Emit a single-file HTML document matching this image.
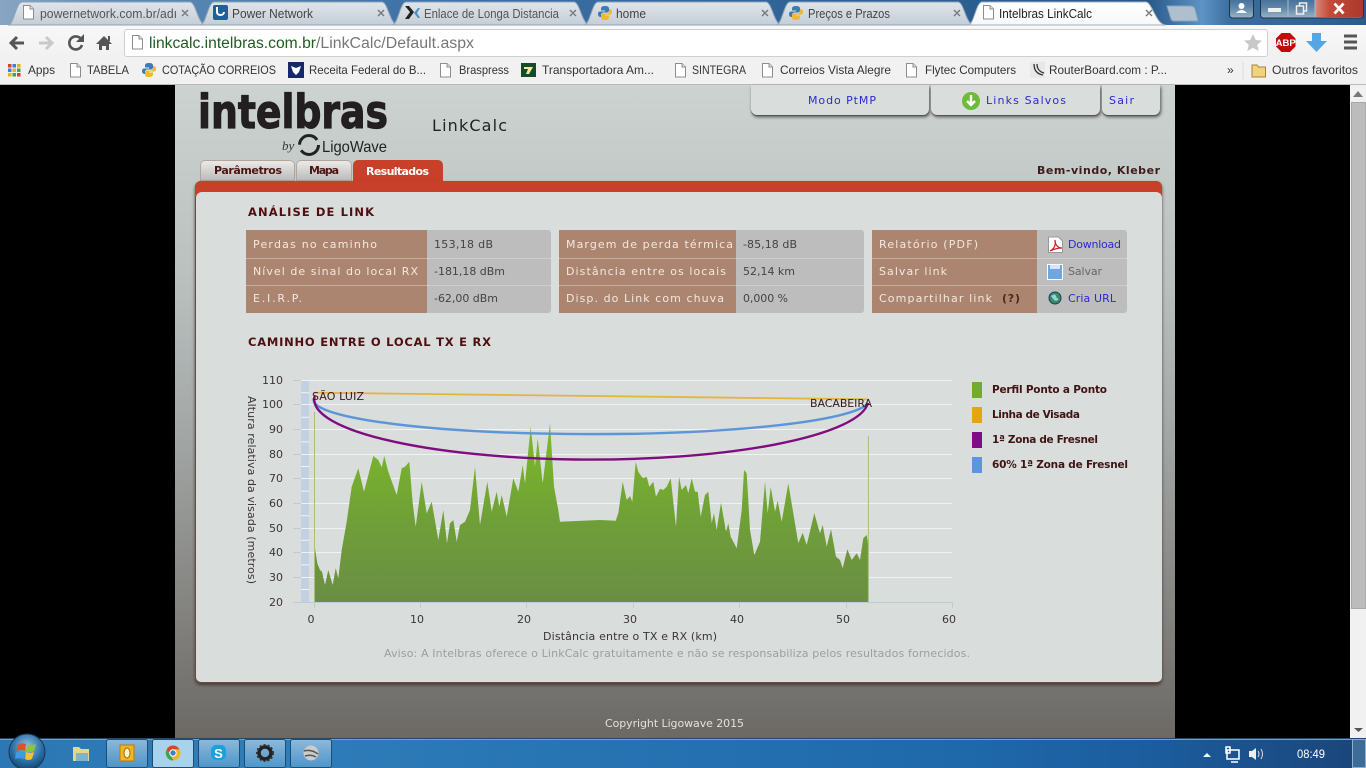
<!DOCTYPE html>
<html lang="pt-BR"><head><meta charset="utf-8"><title>Intelbras LinkCalc</title>
<style>
html,body{margin:0;padding:0;width:1366px;height:768px;overflow:hidden;background:#000}
.a{position:absolute}
#content{left:175px;top:85px;width:1000px;height:653px;background:linear-gradient(#ccd3d1 0,#b9c0be 30%,#a6abaa 50%,#8d8e8b 72%,#6c6965 100%)}
.btn{background:#d9dddc;border-radius:0 0 6px 6px;box-shadow:0 1px 0 #555,1px 2px 3px rgba(40,40,40,.75);top:85px;height:30px}
.tab{top:160px;height:21px;border-radius:5px 5px 0 0;background:linear-gradient(#ececeb,#b9b9b7);box-shadow:inset 0 0 0 1px #b3a49e}
#panel{left:195px;top:181px;width:967px;height:502px;background:#6a4a46;border-radius:6px;box-shadow:0 2px 3px rgba(60,40,40,.8)}
#band{left:195px;top:181px;width:967px;height:16px;background:#c9402a;border-radius:6px 6px 0 0}
#inner{left:196px;top:192px;width:966px;height:490px;background:#d9dddc;border-radius:6px 6px 5px 5px}
.val{background:#bdbdbd;border-radius:0 3px 3px 0;top:230px;height:83px}
.lab{background:#ab8570;top:230px;height:83px}
.sep{background:#c8ad9e;height:1px}
.sepv{background:#cdcdcd;height:1px}
svg{position:absolute;left:0;top:0}
.c{font-family:"Liberation Sans",sans-serif;font-size:12px;fill:#333}
.v{font-family:"DejaVu Sans",Verdana,sans-serif;font-size:11px}
.lb{fill:#f2e8e0}.vl{fill:#444}.lk{fill:#2b2bd0}
.b{font-weight:bold}.t{fill:#4e0f10;font-weight:bold;font-size:11.5px}
.ax{fill:#3c3534;font-size:11px}
</style></head><body>
<div class="a" style="left:0;top:0;width:1366px;height:25px;background:linear-gradient(90deg,#88a6c2 0,#5f8cb6 8%,#3f73a6 30%,#2f6296 60%,#275888 84%,#5d93c5 88%,#3b6f9f 90%,#2b5b8c 100%)"></div>
<div class="a" style="left:0;top:25px;width:1366px;height:32px;background:linear-gradient(#f8f8f8,#f1f1f1)"></div>
<div class="a" style="left:0;top:57px;width:1366px;height:27px;background:#f1f1f1;border-bottom:1px solid #b9b9b9"></div>
<div class="a" style="left:124px;top:29px;width:1142px;height:26px;background:#fff;border:1px solid #cfcfcf;border-radius:3px"></div>
<div class="a" id="content"></div>
<div class="a" style="left:1350px;top:85px;width:16px;height:654px;background:#f1f1f1"></div>
<div class="a" style="left:1351px;top:102px;width:13px;height:505px;background:#bcbcbc;border:1px solid #a8a8a8"></div>
<div class="a btn" style="left:751px;width:178px"></div>
<div class="a btn" style="left:931px;width:169px"></div>
<div class="a btn" style="left:1102px;width:58px"></div>
<div class="a tab" style="left:200px;width:95px"></div>
<div class="a tab" style="left:296px;width:56px"></div>
<div class="a tab" style="left:353px;width:90px;background:#c9402a;box-shadow:none"></div>
<div class="a" id="panel"></div><div class="a" id="band"></div><div class="a" id="inner"></div>
<div class="a lab" style="left:246px;width:181px"></div><div class="a val" style="left:427px;width:124px"></div>
<div class="a lab" style="left:559px;width:177px"></div><div class="a val" style="left:736px;width:128px"></div>
<div class="a lab" style="left:872px;width:165px"></div><div class="a val" style="left:1037px;width:90px"></div>
<div class="a sep" style="left:246px;top:258px;width:181px"></div><div class="a sep" style="left:246px;top:285px;width:181px"></div>
<div class="a sep" style="left:559px;top:258px;width:177px"></div><div class="a sep" style="left:559px;top:285px;width:177px"></div>
<div class="a sep" style="left:872px;top:258px;width:165px"></div><div class="a sep" style="left:872px;top:285px;width:165px"></div>
<div class="a sepv" style="left:427px;top:258px;width:124px"></div><div class="a sepv" style="left:427px;top:285px;width:124px"></div>
<div class="a sepv" style="left:736px;top:258px;width:128px"></div><div class="a sepv" style="left:736px;top:285px;width:128px"></div>
<div class="a sepv" style="left:1037px;top:258px;width:90px"></div><div class="a sepv" style="left:1037px;top:285px;width:90px"></div>
<div class="a" style="left:0;top:738px;width:1366px;height:30px;background:linear-gradient(90deg,#2c77b4 0,#2f7db9 20%,#1f69ab 70%,#1b5c9c 85%,#1b4478 100%);box-shadow:inset 0 1px 0 #1c4a70,inset 0 2px 0 #6ea3c9"></div>

<svg width="1366" height="768" viewBox="0 0 1366 768">
<defs>
<g id="pg"><path d="M1.5 .5h6.5l3.500 3.500v10h-10z" fill="#fff" stroke="#8d8d8d"/><path d="M8 .5v3.500h3.500" fill="#e6e6e6" stroke="#8d8d8d"/></g>
<g id="py"><path d="M7 0c-3 0-4 1-4 3v1.500h4v1H2C0 5.500 0 8 0 8c0 2 1 3 3 3V9c0-1.500 1-2.500 3-2.500h3c1 0 2-1 2-2V2.500C11 1 10 0 7 0z" fill="#3b7bb6"/><path d="M7 14c3 0 4-1 4-3V9.500H7v-1h5c2 0 2-2.500 2-2.500 0-2-1-3-3-3v2c0 1.500-1 2.500-3 2.500H5c-1 0-2 1-2 2v2c0 1.500 1 2.500 4 2.500z" fill="#eeb92a"/></g>
<linearGradient id="gt" x1="0" y1="0" x2="0" y2="1"><stop offset="0" stop-color="#dfe5ea"/><stop offset="1" stop-color="#c5cdd6"/></linearGradient>
<linearGradient id="ga" x1="0" y1="0" x2="0" y2="1"><stop offset="0" stop-color="#fff"/><stop offset="1" stop-color="#f8f8f8"/></linearGradient>
<linearGradient id="gr" gradientUnits="userSpaceOnUse" x1="0" y1="425" x2="0" y2="602"><stop offset="0" stop-color="#7dbb27"/><stop offset=".55" stop-color="#6f9f38"/><stop offset="1" stop-color="#6a8e44"/></linearGradient>
<linearGradient id="gb" x1="0" y1="0" x2="0" y2="1"><stop offset="0" stop-color="#dcebf5" stop-opacity=".55"/><stop offset="1" stop-color="#6fb0dc" stop-opacity=".5"/></linearGradient>
<linearGradient id="gw" x1="0" y1="0" x2="0" y2="1"><stop offset="0" stop-color="#3e6b94"/><stop offset=".5" stop-color="#5f86a8"/><stop offset="1" stop-color="#9ab3c8"/></linearGradient>
<linearGradient id="gc" x1="0" y1="0" x2="1" y2="0"><stop offset="0" stop-color="#d98a7c"/><stop offset=".3" stop-color="#c44a38"/><stop offset="1" stop-color="#a83a2c"/></linearGradient>
<radialGradient id="orb" cx=".5" cy=".35" r=".7"><stop offset="0" stop-color="#8cc4e4"/><stop offset=".6" stop-color="#2a6ea6"/><stop offset="1" stop-color="#123b63"/></radialGradient>
</defs>

<!-- browser tabs -->
<g stroke="#8ea3b6" stroke-width="1" fill="url(#gt)">
<path d="M8 25C14 25 16 2 22 2H190C196 2 198 25 206 25Z"/>
<path d="M200 25C206 25 208 2 214 2H382C388 2 390 25 398 25Z"/>
<path d="M392 25C398 25 400 2 406 2H574C580 2 582 25 590 25Z"/>
<path d="M584 25C590 25 592 2 598 2H766C772 2 774 25 782 25Z"/>
<path d="M776 25C782 25 784 2 790 2H958C964 2 966 25 974 25Z"/>
</g>
<path d="M968 25C974 25 976 2 982 2H1146C1152 2 1156 25 1166 25Z" fill="url(#ga)" stroke="#9fb0c0"/>
<path d="M1167 6H1190Q1194 6 1195 9L1198 21H1174Q1172 21 1171 19Z" fill="#aebfd0" stroke="#8ba2b8"/>
<use href="#pg" x="22" y="5"/><use href="#pg" x="982" y="5"/>
<rect x="213" y="5" width="15" height="15" rx="2" fill="#1d5f9f"/><path d="M217 7v5c0 4 7 4 7 0" fill="none" stroke="#fff" stroke-width="2"/>
<path d="M405 6l5 6-5 7h4l5-7-5-6z" fill="#222"/><path d="M418 8l-4 5 4 5h2l-3-5 3-5z" fill="#4b8fc0"/>
<use href="#py" x="598" y="6"/><use href="#py" x="789" y="6"/>
<g>
<text class="c" x="40" y="18" textLength="137" lengthAdjust="spacingAndGlyphs" style="fill:#555;font-size:12.500px">powernetwork.com.br/adı</text>
<text class="c" x="232" y="18" textLength="81" lengthAdjust="spacingAndGlyphs" style="fill:#444;font-size:12.500px">Power Network</text>
<text class="c" x="424" y="18" textLength="135" lengthAdjust="spacingAndGlyphs" style="fill:#555;font-size:12.500px">Enlace de Longa Distancia</text>
<text class="c" x="616" y="18" textLength="30" lengthAdjust="spacingAndGlyphs" style="fill:#444;font-size:12.500px">home</text>
<text class="c" x="808" y="18" textLength="82" lengthAdjust="spacingAndGlyphs" style="fill:#444;font-size:12.500px">Preços e Prazos</text>
<text class="c" x="999" y="18" textLength="93" lengthAdjust="spacingAndGlyphs" style="fill:#222;font-size:12.500px">Intelbras LinkCalc</text>
</g>
<g stroke="#777" stroke-width="1.400" fill="none"><path d="M182 10l6 6m0-6l-6 6M378 10l6 6m0-6l-6 6M570 10l6 6m0-6l-6 6M762 10l6 6m0-6l-6 6M954 10l6 6m0-6l-6 6M1146 10l6 6m0-6l-6 6"/></g>

<!-- window controls -->
<rect x="1229.500" y="-3" width="24" height="21" rx="3" fill="url(#gw)" stroke="#1f3448"/>
<circle cx="1241.500" cy="6" r="3" fill="#fff"/><path d="M1236 13q5.500-6 11 0z" fill="#fff"/>
<rect x="1260.500" y="-3" width="103" height="21" rx="3" fill="url(#gw)" stroke="#1f3448"/>
<path d="M1315 0h47q1 0 1 3v12q0 2-3 2h-45z" fill="url(#gc)"/><path d="M1288 0v17M1315 0v17" stroke="#aabccb"/>
<rect x="1268" y="8" width="13" height="4" fill="#f0f0f0"/>
<path d="M1296.500 6h7v8h-7zM1299.500 6V3h7v8h-3" fill="none" stroke="#eee" stroke-width="1.500"/>
<path d="M1334.500 3.500l9 10M1343.500 3.500l-9 10" stroke="#fff" stroke-width="2.800" fill="none"/>

<!-- toolbar icons -->
<path d="M24 43H12M17 37l-6 6 6 6" fill="none" stroke="#555" stroke-width="3"/>
<path d="M39 43h12M46 37l6 6-6 6" fill="none" stroke="#c9c9c9" stroke-width="3"/>
<path d="M81 39a6.500 6.500 0 1 0 1 6" fill="none" stroke="#555" stroke-width="2.600"/><path d="M84 34v8h-8z" fill="#555"/>
<path d="M96 44l8-8 8 8h-3v6h-3v-4h-4v4h-3v-6z" fill="#555"/><rect x="108" y="36" width="2" height="5" fill="#555"/>
<use href="#pg" x="131" y="35"/>
<text class="c" x="149" y="48" textLength="167" lengthAdjust="spacingAndGlyphs" style="font-size:15.500px;fill:#205a20">linkcalc.intelbras.com.br</text>
<text class="c" x="316" y="48" textLength="158" lengthAdjust="spacingAndGlyphs" style="font-size:15.500px;fill:#777">/LinkCalc/Default.aspx</text>
<path d="M1253 34l2.700 6 6.300.6-4.800 4.200 1.500 6.200-5.700-3.300-5.700 3.300 1.500-6.200-4.800-4.200 6.300-.6z" fill="#c8c8c8"/>
<path d="M1281.500 33h8.500l5.500 5.500v8l-5.500 5.500h-8.500l-5.500-5.500v-8z" fill="#c20a0a"/>
<text x="1285.700" y="46" text-anchor="middle" style="font:bold 9.500px 'Liberation Sans',sans-serif;fill:#fff">ABP</text>
<path d="M1312 33h9v8h6l-10.500 11L1306 41h6z" fill="#54a6e4"/>
<path d="M1344 36h13M1344 42h13M1344 48h13" stroke="#555" stroke-width="3"/>

<!-- bookmarks -->
<g><rect x="8" y="64" width="3.500" height="3.500" fill="#d9442f"/><rect x="12.500" y="64" width="3.500" height="3.500" fill="#3a7fe0"/><rect x="17" y="64" width="3.500" height="3.500" fill="#e6b21e"/><rect x="8" y="68.500" width="3.500" height="3.500" fill="#3a7fe0"/><rect x="12.500" y="68.500" width="3.500" height="3.500" fill="#e6b21e"/><rect x="17" y="68.500" width="3.500" height="3.500" fill="#3aa655"/><rect x="8" y="73" width="3.500" height="3.500" fill="#e6b21e"/><rect x="12.500" y="73" width="3.500" height="3.500" fill="#3aa655"/><rect x="17" y="73" width="3.500" height="3.500" fill="#d9442f"/></g>
<use href="#pg" x="69" y="63"/><use href="#py" x="142" y="63"/>
<rect x="288" y="62" width="16" height="16" fill="#152a66"/><path d="M291 66l5 2 5-2-2 6-3 3-3-3z" fill="#fff"/>
<use href="#pg" x="439" y="63"/>
<rect x="521" y="63" width="15" height="14" fill="#124c2a"/><path d="M524 67h9l-4 7h-3l2-5h-4z" fill="#f3e6a0"/>
<use href="#pg" x="674" y="63"/><use href="#pg" x="761" y="63"/><use href="#pg" x="905" y="63"/>
<rect x="1030" y="62" width="15" height="16" fill="#e8e8e8"/><path d="M1034 64c0 6 3 10 9 11M1037 64c0 5 3 8 7 9" fill="none" stroke="#333" stroke-width="1.300"/>
<path d="M1252 65h5l1.500 2h7v10h-13.500z" fill="#f3d27f" stroke="#a9853a"/>
<text class="c" x="28" y="74" textLength="27" lengthAdjust="spacingAndGlyphs">Apps</text>
<text class="c" x="87" y="74" textLength="42" lengthAdjust="spacingAndGlyphs">TABELA</text>
<text class="c" x="162" y="74" textLength="114" lengthAdjust="spacingAndGlyphs">COTAÇÃO CORREIOS</text>
<text class="c" x="309" y="74" textLength="117" lengthAdjust="spacingAndGlyphs">Receita Federal do B...</text>
<text class="c" x="459" y="74" textLength="50" lengthAdjust="spacingAndGlyphs">Braspress</text>
<text class="c" x="542" y="74" textLength="112" lengthAdjust="spacingAndGlyphs">Transportadora Am...</text>
<text class="c" x="692" y="74" textLength="54" lengthAdjust="spacingAndGlyphs">SINTEGRA</text>
<text class="c" x="780" y="74" textLength="111" lengthAdjust="spacingAndGlyphs">Correios Vista Alegre</text>
<text class="c" x="925" y="74" textLength="91" lengthAdjust="spacingAndGlyphs">Flytec Computers</text>
<text class="c" x="1049" y="74" textLength="118" lengthAdjust="spacingAndGlyphs">RouterBoard.com : P...</text>
<text class="c" x="1227" y="74">»</text>
<text class="c" x="1272" y="74" textLength="86" lengthAdjust="spacingAndGlyphs">Outros favoritos</text>
<path d="M1243 62v18" stroke="#ddd"/>

<!-- scrollbar arrows -->
<path d="M1353 97l5-6 5 6z" fill="#777"/><path d="M1354 728h9l-4.500 4z" fill="#555"/>

<!-- logo -->
<text x="198" y="128" textLength="190" lengthAdjust="spacingAndGlyphs" style="font:bold 46px 'DejaVu Sans',sans-serif;fill:#231f20;stroke:#231f20;stroke-width:1.200">intelbras</text>
<text x="282" y="150" style="font:italic 13px 'Liberation Serif',serif;fill:#333">by</text>
<circle cx="309" cy="145" r="9.500" fill="none" stroke="#222" stroke-width="3" stroke-dasharray="24 6"/>
<text x="322" y="152" textLength="65" lengthAdjust="spacingAndGlyphs" style="font:16px 'Liberation Sans',sans-serif;fill:#222">LigoWave</text>
<text class="v" x="432" y="131" textLength="75" style="font-size:16px;fill:#222">LinkCalc</text>

<!-- nav text -->
<g>
<text class="v lk" x="808" y="104" textLength="68">Modo PtMP</text>
<text class="v lk" x="986" y="104" textLength="80">Links Salvos</text>
<text class="v lk" x="1109" y="104" textLength="25">Sair</text>
<text class="v b" x="214" y="174" textLength="68" style="fill:#4e1414">Parâmetros</text>
<text class="v b" x="309" y="174" textLength="30" style="fill:#4e1414">Mapa</text>
<text class="v b" x="366" y="175" textLength="63" style="fill:#fff">Resultados</text>
<text class="v b" x="1037" y="174" textLength="123" style="fill:#3f1c1c">Bem-vindo, Kleber</text>
<text class="v t" x="248" y="216" textLength="126">ANÁLISE DE LINK</text>
<text class="v t" x="248" y="346" textLength="243">CAMINHO ENTRE O LOCAL TX E RX</text>
<text class="v lb" x="253" y="248" textLength="124">Perdas no caminho</text>
<text class="v lb" x="253" y="275" textLength="165">Nível de sinal do local RX</text>
<text class="v lb" x="253" y="302" textLength="49">E.I.R.P.</text>
<text class="v vl" x="434" y="248" textLength="59">153,18 dB</text>
<text class="v vl" x="434" y="275" textLength="71">-181,18 dBm</text>
<text class="v vl" x="434" y="302" textLength="64">-62,00 dBm</text>
<text class="v lb" x="566" y="248" textLength="167">Margem de perda térmica</text>
<text class="v lb" x="566" y="275" textLength="160">Distância entre os locais</text>
<text class="v lb" x="566" y="302" textLength="158">Disp. do Link com chuva</text>
<text class="v vl" x="743" y="248" textLength="54">-85,18 dB</text>
<text class="v vl" x="743" y="275" textLength="52">52,14 km</text>
<text class="v vl" x="743" y="302" textLength="45">0,000 %</text>
<text class="v lb" x="879" y="248" textLength="99">Relatório (PDF)</text>
<text class="v lb" x="879" y="275" textLength="68">Salvar link</text>
<text class="v lb" x="879" y="302" textLength="113">Compartilhar link</text>
<text class="v b" x="1002" y="302" textLength="18" style="fill:#4e2a1c">(?)</text>
<text class="v lk" x="1068" y="248" textLength="53">Download</text>
<text class="v" x="1068" y="275" textLength="34" style="fill:#666">Salvar</text>
<text class="v lk" x="1068" y="302" textLength="48">Cria URL</text>
</g>
<circle cx="971" cy="101" r="9" fill="#6dbb3a"/><path d="M971 95v10M967 101l4 4 4-4" fill="none" stroke="#fff" stroke-width="2.400"/>
<path d="M1048.500 237h10l4 4v11.500h-14z" fill="#fff" stroke="#999"/><path d="M1050 251c4-2 6-6 5-11 0 5 3 8 7 8-4 0-8 1-12 3z" fill="none" stroke="#c8231f" stroke-width="1.300"/>
<rect x="1047.500" y="264.500" width="15" height="15" fill="#6fa6dc" stroke="#fff"/><rect x="1050" y="265" width="10" height="4" fill="#d7e6f5"/>
<circle cx="1055" cy="298" r="6" fill="#3a8a5a" stroke="#1b3f66"/><path d="M1051 296q4-3 5 0t3 3q-3 3-5 1z" fill="#8fd0ef"/>

<!-- chart -->
<rect x="301" y="380" width="8" height="222" fill="#c1d1e1"/>
<g stroke="#f1f3f3" stroke-width="1">
<path d="M301 392.700h8M301 417.300h8M301 441.900h8M301 466.500h8M301 491.100h8M301 515.700h8M301 540.300h8M301 564.900h8M301 589.500h8"/>
<path d="M301 380.500H952M301 404.500H952M301 429.500H952M301 454.500H952M301 478.500H952M301 503.500H952M301 528.500H952M301 552.500H952M301 577.500H952"/>
</g>
<path d="M293 380.500h8M293 404.500h8M293 429.500h8M293 454.500h8M293 478.500h8M293 503.500h8M293 528.500h8M293 552.500h8M293 577.500h8M293 602.500h659M314.500 602v6M420.500 602v6M526.500 602v6M633.500 602v6M739.500 602v6M846.500 602v6M952.500 602v6" stroke="#bccbd8" fill="none"/>
<path fill="url(#gr)" d="M314 602L314.700 546.700 317.300 563.300 320 570 322 571.700 325 585 328.300 570 332.700 585 335.700 568.300 338.300 578.300 341.700 550 346.700 521.700 351.700 486.700 358.300 468.300 364 491.700 373.300 456 378.300 460 381.700 467.300 384.300 456 388.300 471.700 396.700 495 401.700 468.300 405 466.700 409.300 461.700 412.700 503.300 415.700 526.700 421.700 481.700 426.700 513.300 431.700 501.700 438.300 540 443.300 510 447 543.300 450 523.300 453.300 520 456.700 541.700 460 525 465 521.700 470 510 475 466.700 480 525 487.300 481.700 491.700 511.700 496.700 491.700 499.300 506.700 501.700 495 506.700 516.700 513.300 478.300 518.300 491.700 522.700 465 525 483.300 530.700 426.700 535 466.700 537.700 438.300 542.700 483.300 550 423.300 554 486.700 558.300 510 560 521.700 600 520 615.700 520.700 618.300 513.300 622.700 481.700 626.700 500 630 496 632.300 501.700 635.700 461.700 638.300 471.700 641.700 476.700 643.300 478.300 646.700 476.700 649.300 486.700 653.300 481.700 656 496.700 660 488.700 663.300 490 666.700 486.700 670.700 478.300 676 526.700 679 476.700 681.700 490 686 485 688.300 493.300 691.700 478.300 695 491.700 697.700 491.700 700.700 516.700 705 495 708.300 491.700 711.700 523.300 714 513.300 716.700 530 721 502.700 726 531.700 728.300 523.300 730.700 536.700 736.700 548.300 741.700 510 744 470 746.700 473.300 750 530 754.300 555 760 541.700 765 481.700 767.700 513.300 770.700 486.700 775 511.700 777.700 500.700 781.700 521.700 788.300 483.300 793.300 513.300 798.300 543.300 802.700 532.700 806.700 545 814.300 513.300 820 533.300 822.700 525 826.700 546.700 831 529.300 836 556.700 840 560 842.700 568.300 847.300 549.300 851.700 560 856.700 553.300 860 560 863.300 538.300 866.700 535 868 543.300 868.300 506.700 868.700 602Z"/>
<path d="M314.500 602V412M868.400 602V436" stroke="#a9c078" stroke-width="1" fill="none"/>
<path d="M314 392.700L868 399.300" stroke="#e2b63d" stroke-width="1.800" fill="none"/>
<path d="M314.700 397A276.700 34 0 0 0 868 403" stroke="#5c95d8" stroke-width="2.400" fill="none"/>
<path d="M314.700 396A276.700 60 0 0 0 868 403" stroke="#800c80" stroke-width="2.400" fill="none"/>
<text class="v" x="312" y="400" textLength="52" style="fill:#38181a">SÃO LUIZ</text>
<text class="v" x="810" y="407" textLength="62" style="fill:#38181a">BACABEIRA</text>
<g text-anchor="end">
<text class="v ax" x="283" y="384">110</text><text class="v ax" x="283" y="408">100</text><text class="v ax" x="283" y="433">90</text><text class="v ax" x="283" y="458">80</text><text class="v ax" x="283" y="482">70</text><text class="v ax" x="283" y="507">60</text><text class="v ax" x="283" y="532">50</text><text class="v ax" x="283" y="556">40</text><text class="v ax" x="283" y="581">30</text><text class="v ax" x="283" y="606">20</text>
</g>
<g text-anchor="middle">
<text class="v ax" x="311" y="623">0</text><text class="v ax" x="417" y="623">10</text><text class="v ax" x="524" y="623">20</text><text class="v ax" x="630" y="623">30</text><text class="v ax" x="737" y="623">40</text><text class="v ax" x="843" y="623">50</text><text class="v ax" x="949" y="623">60</text>
</g>
<text class="v ax" x="543" y="640" textLength="174">Distância entre o TX e RX (km)</text>
<text class="v ax" transform="translate(248,396) rotate(90)" textLength="188">Altura relativa da visada (metros)</text>
<rect x="972" y="382" width="10" height="16" fill="#72ab2d"/><rect x="972" y="407" width="10" height="16" fill="#dfa80c"/><rect x="972" y="432" width="10" height="16" fill="#800c80"/><rect x="972" y="457" width="10" height="16" fill="#5c95d8"/>
<g>
<text class="v b" x="992" y="393" textLength="115" style="font-size:10.500px;fill:#3f1414">Perfil Ponto a Ponto</text>
<text class="v b" x="992" y="418" textLength="88" style="font-size:10.500px;fill:#3f1414">Linha de Visada</text>
<text class="v b" x="992" y="443" textLength="106" style="font-size:10.500px;fill:#3f1414">1ª Zona de Fresnel</text>
<text class="v b" x="992" y="468" textLength="136" style="font-size:10.500px;fill:#3f1414">60% 1ª Zona de Fresnel</text>
</g>
<text class="v" x="384" y="657" textLength="586" style="fill:#9aa0a0">Aviso: A Intelbras oferece o LinkCalc gratuitamente e não se responsabiliza pelos resultados fornecidos.</text>
<text class="v" x="605" y="727" textLength="139" style="fill:#e0e0dc">Copyright Ligowave 2015</text>

<!-- taskbar -->
<g stroke="#1f4e74" fill="url(#gb)">
<rect x="106.500" y="739.500" width="41" height="28" rx="2"/><rect x="152.500" y="739.500" width="41" height="28" rx="2" fill="#a9d3ec"/><rect x="198.500" y="739.500" width="41" height="28" rx="2"/><rect x="244.500" y="739.500" width="41" height="28" rx="2"/><rect x="290.500" y="739.500" width="41" height="28" rx="2"/>
</g>
<circle cx="27" cy="752" r="18" fill="url(#orb)" stroke="#1a3a55"/>
<path d="M18 745q4-3 8-1l-1 7q-4-2-9 0z" fill="#e0502a"/><path d="M27 744q4 2 9 0l-2 7q-4 2-8 0z" fill="#8cc63f"/><path d="M16 752q4-2 9 0l-1 7q-4-2-9 0z" fill="#3d9be0"/><path d="M26 752q4 2 8 0l-2 7q-4 2-7 0z" fill="#f5c22e"/>
<path d="M73 747h6l2 2h8v12H73z" fill="#e9d48a"/><rect x="76" y="753" width="12" height="8" fill="#7fb5cc"/>
<rect x="120" y="745" width="14" height="16" fill="#f0b429" stroke="#b57c10"/><ellipse cx="127" cy="753" rx="3" ry="5" fill="#fff3c8" stroke="#a06a05"/>
<circle cx="173" cy="753" r="7.500" fill="#e8b923"/><path d="M173 745.500a7.500 7.500 0 0 1 6.500 3.800h-6.500l-5 3.500-1-4a7.500 7.500 0 0 1 6-3.300z" fill="#d9442f"/><path d="M167 749l3.500 6.500 3 5a7.500 7.500 0 0 1-6.500-11.500z" fill="#3aa655"/><circle cx="173" cy="753" r="3.200" fill="#3a7fe0" stroke="#fff"/>
<rect x="211" y="745" width="15" height="15" rx="5" fill="#19a2e0"/><text x="218.500" y="758" text-anchor="middle" style="font:bold 13px 'Liberation Sans',sans-serif;fill:#fff">S</text>
<circle cx="265" cy="753" r="6" fill="none" stroke="#222" stroke-width="3.500"/><circle cx="265" cy="753" r="8" fill="none" stroke="#333" stroke-width="2" stroke-dasharray="2 2"/>
<circle cx="311" cy="753" r="7.500" fill="#ccc"/><path d="M304 751q7-2 14 3M305 756q6-2 11 1" stroke="#555" stroke-width="1.500" fill="none"/>
<path d="M1203 757l4-4 4 4z" fill="#fff"/>
<path d="M1227 750h12v9h-12zM1231 762h7M1226 747v6h4v-6z" fill="none" stroke="#fff" stroke-width="1.500"/>
<path d="M1249 751h3l4-3v12l-4-3h-3z" fill="#eee"/><path d="M1258 751q2 3 0 6M1261 749q3 5 0 10" fill="none" stroke="#ddd"/>
<text class="c" x="1297" y="758" textLength="28" lengthAdjust="spacingAndGlyphs" style="fill:#fff;font-size:12px">08:49</text>
<rect x="1352.500" y="739.500" width="13" height="28" fill="#3d6c98" stroke="#8fb0cc"/>
</svg>
</body></html>
